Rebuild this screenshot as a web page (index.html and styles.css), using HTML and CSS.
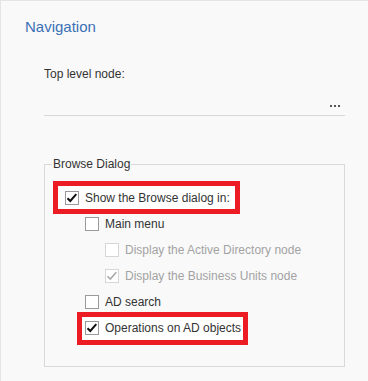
FILE: index.html
```html
<!DOCTYPE html>
<html>
<head>
<meta charset="utf-8">
<link rel="stylesheet" href="styles.css">
</head>
<body>
<div class="panel">
  <h1 class="title">Navigation</h1>
  <div class="section">
    <div class="label">Top level node:</div>
    <div class="picker">
      <span class="dots"><i></i><i></i><i></i></span>
    </div>
    <fieldset class="group">
      <legend class="legend">Browse Dialog</legend>
      <div class="options">
        <div class="opt lvl0 mark mark-a">
          <span class="cb"><svg viewBox="0 0 12 12" class="tick"><path d="M1.5 6.2 L4.3 9 L10.3 2.2"/></svg></span>
          <span class="txt">Show the Browse dialog in:</span>
        </div>
        <div class="opt lvl1">
          <span class="cb"></span>
          <span class="txt">Main menu</span>
        </div>
        <div class="opt lvl2 disabled">
          <span class="cb"></span>
          <span class="txt">Display the Active Directory node</span>
        </div>
        <div class="opt lvl2 disabled">
          <span class="cb"><svg viewBox="0 0 12 12" class="tick"><path d="M1.5 6.2 L4.3 9 L10.3 2.2"/></svg></span>
          <span class="txt">Display the Business Units node</span>
        </div>
        <div class="opt lvl1">
          <span class="cb"></span>
          <span class="txt">AD search</span>
        </div>
        <div class="opt lvl1 mark mark-b">
          <span class="cb"><svg viewBox="0 0 12 12" class="tick"><path d="M1.5 6.2 L4.3 9 L10.3 2.2"/></svg></span>
          <span class="txt">Operations on AD objects</span>
        </div>
      </div>
    </fieldset>
  </div>
</div>
</body>
</html>
```
FILE: styles.css
```css
* { box-sizing: border-box; }
html, body { margin: 0; padding: 0; }
body {
  font-family: "Liberation Sans", Arial, sans-serif;
  font-size: 12px;
  color: #333;
  background: #f9f9f9;
}
.panel {
  min-height: 381px;
  background: #f9f9f9;
  border-left: 1px solid #e4e4e4;
  border-top: 1px solid #e4e4e4;
  padding: 16px 0 0 24px;
}
.title {
  margin: 0;
  font-size: 15px;
  line-height: 20px;
  font-weight: normal;
  color: #3a70b5;
}
.section {
  margin-left: 19px;
  width: 301px;
}
.label {
  margin-top: 29px;
  line-height: 16px;
  color: #333;
}
.picker {
  margin-top: 11px;
  height: 23px;
  border-bottom: 1px solid #d8d8d8;
  display: flex;
  justify-content: flex-end;
  align-items: flex-end;
  padding: 0 5px 8px 0;
}
.dots { display: flex; gap: 2px; }
.dots i {
  display: block;
  width: 2px;
  height: 2px;
  background: #555;
}
.group {
  margin: 40px 0 0 0;
  padding: 18px 8px 30px 8px;
  border: 1px solid #d9d9d9;
  min-width: 0;
}
.legend {
  padding: 0 1px;
  margin-left: -1px;
  line-height: 16px;
  color: #333;
}
.options {
  display: flex;
  flex-direction: column;
  gap: 10px;
}
.opt {
  display: flex;
  align-items: center;
  gap: 6px;
  height: 16px;
  line-height: 16px;
  width: fit-content;
  white-space: nowrap;
}
.lvl0 { margin-left: 12px; }
.lvl1 { margin-left: 32px; }
.lvl2 { margin-left: 52px; }
.cb {
  width: 14px;
  height: 14px;
  border: 1px solid #9a9a9a;
  background: #fff;
  display: flex;
  align-items: center;
  justify-content: center;
  flex: none;
}
.tick { width: 12px; height: 12px; }
.tick path {
  fill: none;
  stroke: #111;
  stroke-width: 2;
}
.disabled .cb { border-color: #d6d6d6; }
.disabled .tick path { stroke: #a8a8a8; stroke-width: 1.6; }
.disabled .txt { color: #a3a3a3; }
.mark {
  background: #fff;
  outline: 5px solid #ec1c24;
}
.mark-a {
  padding: 4px 5px 3px 7px;
  margin-top: -4px;
  margin-bottom: -3px;
  margin-left: 5px;
  height: 23px;
}
.mark-b {
  padding: 3px 2px 4px 3px;
  margin-top: -3px;
  margin-bottom: -4px;
  margin-left: 29px;
  height: 23px;
}
```
